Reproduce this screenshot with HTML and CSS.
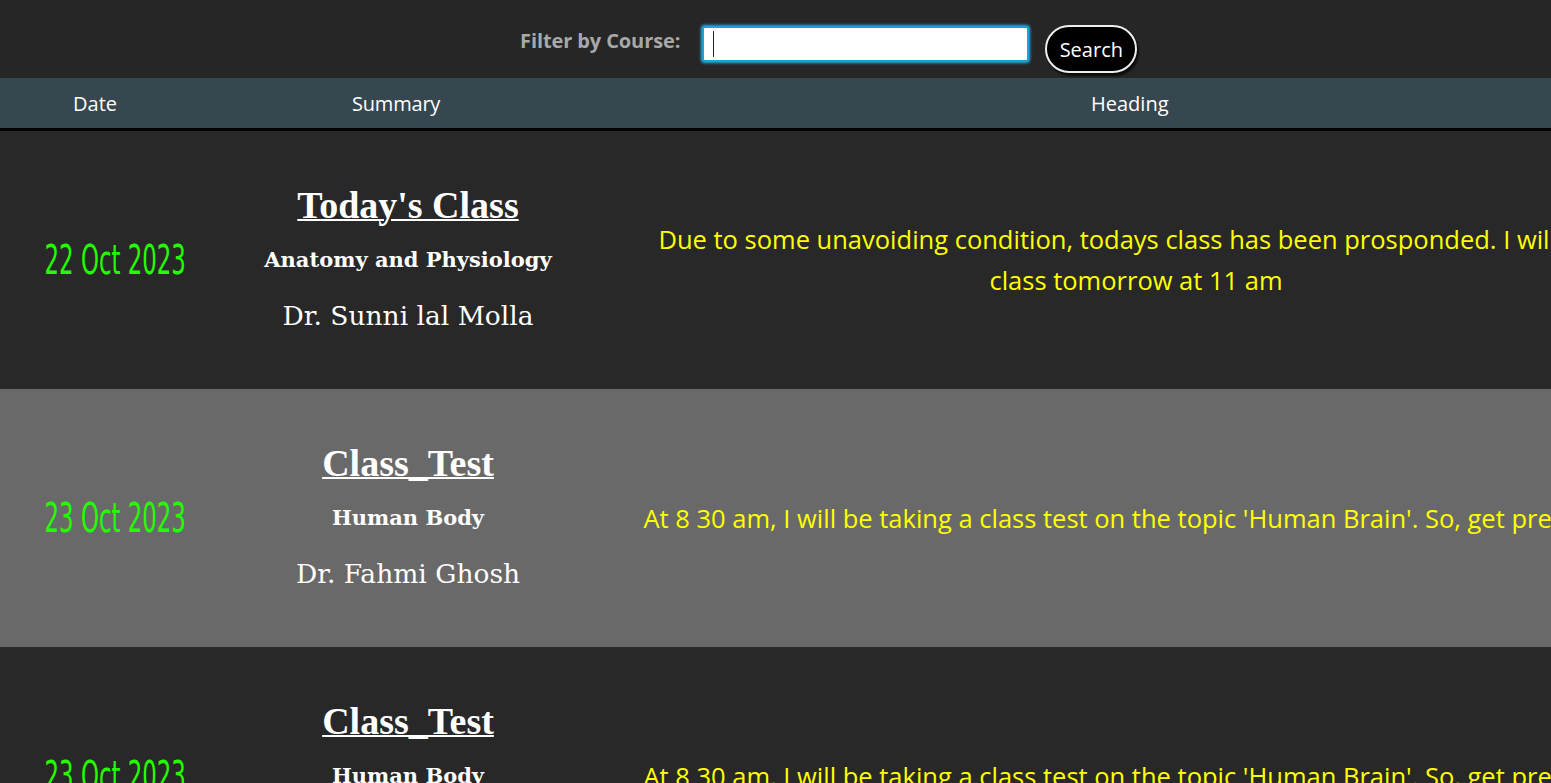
FILE: index.html
```html
<!DOCTYPE html>
<html lang="en">
<head>
<meta charset="utf-8">
<title>Notices</title>
<link rel="stylesheet" href="styles.css">
</head>
<body>
<div class="page">
  <form class="filter-bar">
    <label class="filter-label" for="course">Filter by Course:</label>
    <span class="input-wrap">
      <input class="filter-input" id="course" type="text">
      <span class="caret"></span>
    </span>
    <button class="search-btn" type="button">Search</button>
  </form>

  <div class="thead">
    <div class="th th-date">Date</div>
    <div class="th th-summary">Summary</div>
    <div class="th th-heading">Heading</div>
  </div>

  <div class="row row-dark">
    <div class="cell date"><span class="date-text">22 Oct 2023</span></div>
    <div class="cell summary">
      <div class="title">Today's Class</div>
      <div class="course">Anatomy and Physiology</div>
      <div class="teacher">Dr. Sunni lal Molla</div>
    </div>
    <div class="cell heading">Due to some unavoiding condition, todays class has been prosponded. I will take class tomorrow at 11 am</div>
  </div>

  <div class="row row-light">
    <div class="cell date"><span class="date-text">23 Oct 2023</span></div>
    <div class="cell summary">
      <div class="title">Class_Test</div>
      <div class="course">Human Body</div>
      <div class="teacher">Dr. Fahmi Ghosh</div>
    </div>
    <div class="cell heading">At 8 30 am, I will be taking a class test on the topic 'Human Brain'. So, get prepared.</div>
  </div>

  <div class="row row-dark">
    <div class="cell date"><span class="date-text">23 Oct 2023</span></div>
    <div class="cell summary">
      <div class="title">Class_Test</div>
      <div class="course">Human Body</div>
      <div class="teacher">Dr. Fahmi Ghosh</div>
    </div>
    <div class="cell heading">At 8 30 am, I will be taking a class test on the topic 'Human Brain'. So, get prepared.</div>
  </div>
</div>
</body>
</html>
```

FILE: styles.css
```css
html, body {
  margin: 0;
  padding: 0;
  background: #262626;
  overflow: hidden;
}

.page {
  width: 1686px;
  font-family: "Open Sans", "Noto Sans", sans-serif;
}

.filter-bar {
  display: flex;
  align-items: flex-start;
  height: 78px;
  box-sizing: border-box;
  padding: 25px 0 0 520px;
  margin: 0;
  width: 1551px;
}

.filter-label {
  font-family: "Open Sans", sans-serif;
  font-weight: 700;
  font-size: 20px;
  color: #a8a8a8;
  margin-top: 3px;
  margin-right: 22px;
  line-height: 26px;
  letter-spacing: -0.1px;
}

.input-wrap {
  position: relative;
  display: block;
  margin-top: 1px;
}

.filter-input {
  display: block;
  width: 327px;
  height: 36px;
  box-sizing: border-box;
  border: 2px solid #1aa3d9;
  border-radius: 3px;
  background: #fff;
  outline: none;
  box-shadow: 0 0 3px 1px #2ab0e6;
  font-size: 18px;
  padding: 0 8px;
}

.caret {
  position: absolute;
  left: 11px;
  top: 5px;
  width: 1px;
  height: 26px;
  background: #222;
}

.search-btn {
  margin-left: 16px;
  width: 92px;
  height: 48px;
  box-sizing: border-box;
  background: #000;
  color: #fff;
  border: 2px solid #eee;
  border-radius: 24px;
  font-family: "Open Sans", sans-serif;
  font-size: 20px;
  padding: 0;
  box-shadow: 2px 3px 2px rgba(0,0,0,0.7);
}

.thead {
  display: grid;
  grid-template-columns: 279px 739px 1fr;
  padding-left: 73px;
  height: 50px;
  align-items: center;
  background: #37474f;
  border-bottom: 3px solid #000;
  color: #fff;
  font-size: 20px;
}

.th-summary { letter-spacing: -0.2px; }

.row {
  display: grid;
  grid-template-columns: 230px 356px 1100px;
  height: 258px;
  align-items: center;
}

.row-dark { background: #282828; }
.row-light { background: #696969; }

.cell { text-align: center; }

.date {
  color: #22ff00;
  font-family: "Liberation Sans Narrow", "DejaVu Sans Condensed", sans-serif;
  font-size: 40px;
}

.date-text {
  display: inline-block;
  transform: scaleX(0.635);
}

.summary {
  color: #fff;
  font-family: "Liberation Serif", serif;
}

.title {
  font-size: 38px;
  font-weight: 700;
  text-decoration: underline;
  text-decoration-thickness: 2px;
  line-height: 44px;
  margin-bottom: 19px;
  margin-top: -4px;
}

.course {
  font-family: "DejaVu Serif", serif;
  font-size: 21px;
  font-weight: 600;
  line-height: 28px;
  margin-bottom: 25px;
}

.teacher {
  font-family: "DejaVu Serif", serif;
  font-size: 26.5px;
  line-height: 34px;
}

.heading {
  color: #ffff00;
  font-size: 25.5px;
  line-height: 41px;
  padding: 0 50px;
}
```
